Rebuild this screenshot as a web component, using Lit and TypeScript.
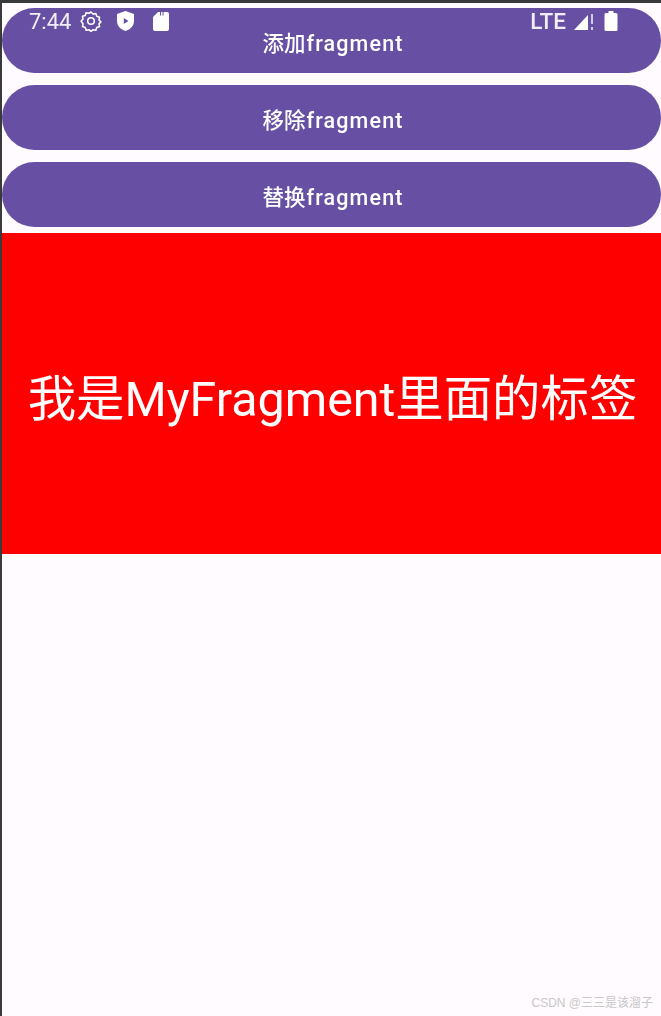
import { LitElement, html, css } from "lit";
import { customElement } from "lit/decorators.js";

@customElement("app-root")
export class AppRoot extends LitElement {
  static styles = css`
    :host {
      display: block;
      position: relative;
      width: 661px;
      height: 1016px;
      overflow: hidden;
      background: #3a3a3c;
      font-family: Roboto, "Noto Sans CJK SC", sans-serif;
    }
    .screen {
      position: absolute;
      inset: 3px 0 0 2px;
      background: #fffbfe;
      display: flex;
      flex-direction: column;
    }
    .buttons {
      display: flex;
      flex-direction: column;
      gap: 12px;
      padding-top: 5px;
    }
    .btn {
      height: 65px;
      border-radius: 33px;
      background: #6750a4;
      color: #fff;
      font-size: 21.5px;
      font-weight: 500;
      display: flex;
      align-items: center;
      justify-content: center;
      padding-left: 3px;
    }
    .btn span { position: relative; top: 0.5px; filter: blur(0.45px); }
    .btn b { font-weight: 500; letter-spacing: 1.15px; margin-left: 1px; }
    .fragment {
      margin-top: 6px;
      height: 321px;
      background: #ff0000;
      color: #fff;
      display: flex;
      align-items: center;
      justify-content: center;
      font-size: 48.4px;
      white-space: nowrap;
      padding-left: 2px;
    }
    .fragment span { position: relative; top: 1px; filter: blur(0.4px); }
    .status {
      position: absolute;
      left: 0;
      right: 0;
      top: 8px;
      height: 26px;
      color: #f1eef7;
      display: flex;
      align-items: center;
      font-size: 22px;
      filter: blur(0.4px);
    }
    .time { margin-left: 29px; width: 46px; }
    .status svg { display: block; fill: #fff; flex: none; }
    .gear { margin-left: 5px; fill: none !important; stroke: #fff; stroke-width: 1.7; }
    .shield { margin-left: 14px; }
    .card { margin-left: 17px; }
    .right { margin-left: auto; display: flex; align-items: center; }
    .lte { font-size: 22.5px; font-weight: 500; margin-right: 7px; }
    .batt { margin: 0 43px 0 9px; }
    .mark {
      position: absolute;
      right: 8px;
      bottom: 6px;
      font: 12px "Liberation Sans", "Noto Sans CJK SC", sans-serif;
      color: #c8c8c8;
      white-space: nowrap;
    }
  `;

  render() {
    return html`
      <div class="screen">
        <div class="buttons">
          <div class="btn"><span>添加<b>fragment</b></span></div>
          <div class="btn"><span>移除<b>fragment</b></span></div>
          <div class="btn"><span>替换<b>fragment</b></span></div>
        </div>
        <div class="fragment"><span>我是MyFragment里面的标签</span></div>
      </div>
      <div class="status">
        <span class="time">7:44</span>
        <svg class="gear" width="22" height="22" viewBox="0 0 24 24">
          <path d="M12 2.200l2.300 2.300 3-.6 1 3 3 1-.6 3 2.100 2.100-2.100 2.100.6 3-3 1-1 3-3-.6-2.300 1.800-2.300-1.800-3 .6-1-3-3-1 .6-3L1.200 12l2.100-2.100-.6-3 3-1 1-3 3 .6z" stroke-linejoin="round"/>
          <circle cx="12" cy="12" r="3.600"/>
        </svg>
        <svg class="shield" width="19" height="22" viewBox="0 0 19 22">
          <path fill-rule="evenodd" d="M9.500 1L18 4v7c0 5-3.600 8.600-8.500 10C4.600 19.600 1 16 1 11V4zM7.800 8v6l4.600-3z"/>
        </svg>
        <svg class="card" width="18" height="21" viewBox="0 0 18 21">
          <path d="M6 1h2v3.500h1V1h1.500v3.500h1V1H15a2 2 0 0 1 2 2v15a2 2 0 0 1-2 2H3a2 2 0 0 1-2-2V6z"/>
        </svg>
        <div class="right">
          <span class="lte">LTE</span>
          <svg width="22" height="22" viewBox="0 0 22 22">
            <path d="M1 20L15 5v15z"/>
            <rect x="18" y="4" width="2" height="10" opacity=".7"/>
            <rect x="18" y="17" width="2" height="3" opacity=".7"/>
          </svg>
          <svg class="batt" width="14" height="22" viewBox="0 0 14 22">
            <path d="M4.500 1h5v2H12a1.500 1.500 0 0 1 1.500 1.500V19.500A1.500 1.500 0 0 1 12 21H2a1.500 1.500 0 0 1-1.500-1.500V4.500A1.500 1.500 0 0 1 2 3h2.500z"/>
          </svg>
        </div>
      </div>
      <div class="mark">CSDN @三三是该溜子</div>
    `;
  }
}
